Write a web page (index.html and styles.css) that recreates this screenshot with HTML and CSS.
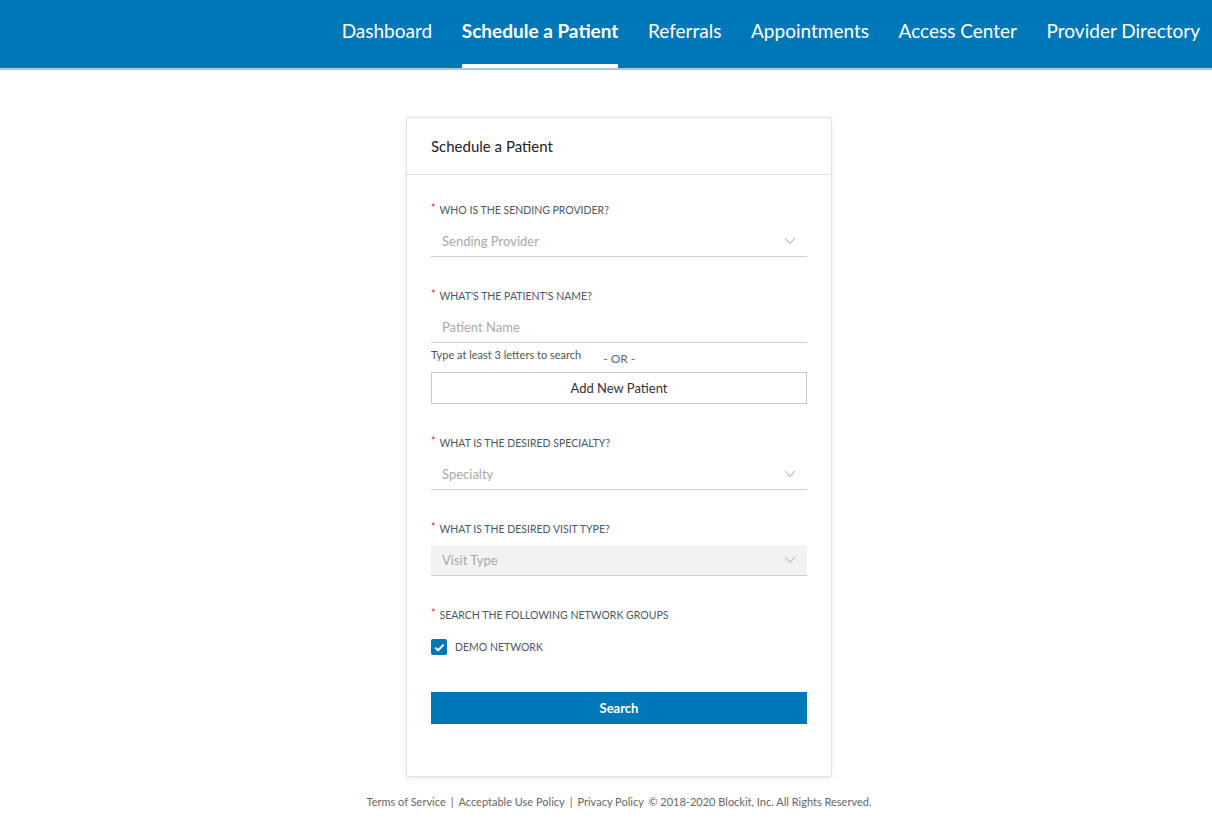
FILE: index.html
```html
<!DOCTYPE html>
<html lang="en">
<head>
    <meta charset="UTF-8">
    <title>Schedule a Patient</title>
    <link rel="stylesheet" href="styles.css">
</head>
<body>

    <header class="topbar">
        <nav class="nav">
            <a href="#" class="nav-item">Dashboard</a>
            <a href="#" class="nav-item active">Schedule a Patient</a>
            <a href="#" class="nav-item">Referrals</a>
            <a href="#" class="nav-item">Appointments</a>
            <a href="#" class="nav-item">Access Center</a>
            <a href="#" class="nav-item">Provider Directory</a>
        </nav>
    </header>

    <main class="page">
        <div class="card">
            <div class="card-header">Schedule a Patient</div>
            <div class="card-body">

                <div class="field">
                    <label class="field-label"><span class="req">*</span>Who is the sending provider?</label>
                    <div class="select">
                        <span class="placeholder">Sending Provider</span>
                        <svg class="chevron" width="12" height="8" viewBox="0 0 12 8"><path d="M1 1l5 5.5L11 1" fill="none" stroke="#b5b5b5" stroke-width="1.1"/></svg>
                    </div>
                </div>

                <div class="field">
                    <label class="field-label"><span class="req">*</span>What's the patient's name?</label>
                    <div class="select">
                        <span class="placeholder">Patient Name</span>
                    </div>
                    <div class="hint-row">
                        <span class="hint">Type at least 3 letters to search</span>
                        <span class="or">- OR -</span>
                    </div>
                    <button class="btn-outline">Add New Patient</button>
                </div>

                <div class="field">
                    <label class="field-label"><span class="req">*</span>What is the desired specialty?</label>
                    <div class="select">
                        <span class="placeholder">Specialty</span>
                        <svg class="chevron" width="12" height="8" viewBox="0 0 12 8"><path d="M1 1l5 5.5L11 1" fill="none" stroke="#b5b5b5" stroke-width="1.1"/></svg>
                    </div>
                </div>

                <div class="field">
                    <label class="field-label"><span class="req">*</span>What is the desired visit type?</label>
                    <div class="select disabled">
                        <span class="placeholder">Visit Type</span>
                        <svg class="chevron" width="12" height="8" viewBox="0 0 12 8"><path d="M1 1l5 5.5L11 1" fill="none" stroke="#b5b5b5" stroke-width="1.1"/></svg>
                    </div>
                </div>

                <div class="field">
                    <label class="field-label"><span class="req">*</span>Search the following network groups</label>
                    <div class="check-row">
                        <span class="checkbox">
                            <svg width="11" height="9" viewBox="0 0 11 9"><path d="M1.3 4.6l2.8 2.7L9.7 1.6" fill="none" stroke="#fff" stroke-width="2"/></svg>
                        </span>
                        <span class="check-label">Demo Network</span>
                    </div>
                </div>

                <button class="btn-primary">Search</button>
            </div>
        </div>

        <footer class="footer">
            <a href="#">Terms of Service</a><span class="sep">|</span><a href="#">Acceptable Use Policy</a><span class="sep">|</span><a href="#">Privacy Policy</a>
            <span class="copy">© 2018-2020 Blockit, Inc. All Rights Reserved.</span>
        </footer>
    </main>

</body>
</html>
```

FILE: styles.css
```css
body {
    margin: 0;
    font-family: "Lato", "Noto Sans", sans-serif;
    background: #fff;
    color: #333;
}
.topbar {
    height: 68px;
    background-color: #0077b6;
    border-bottom: 2px solid #a9c8e4;
    display: flex;
    justify-content: flex-end;
}
.nav {
    display: flex;
    height: 100%;
}
.nav-item {
    color: #fff;
    text-decoration: none;
    font-size: 19px;
    margin: 0 12px 0 17.6px;
    display: flex;
    align-items: center;
    box-sizing: border-box;
    height: 100%;
    padding-bottom: 4px;
    border-bottom: 4px solid transparent;
}
.nav-item:last-child {
    margin-right: 12px;
}
.nav-item.active {
    font-weight: bold;
    border-bottom-color: #fff;
}
.page {
    display: flex;
    flex-direction: column;
    align-items: center;
    padding-top: 47px;
}
.card {
    width: 424px;
    border: 1px solid #e2e2e2;
    border-radius: 2px;
    box-shadow: 0 2px 6px rgba(0, 0, 0, 0.08);
    margin-left: 26px;
}
.card-header {
    height: 57px;
    box-sizing: border-box;
    padding: 19px 24px 0;
    font-size: 15px;
    color: #222;
    border-bottom: 1px solid #e2e2e2;
}
.card-body {
    padding: 29px 24px 52px;
}
.field {
    margin-bottom: 33px;
}
.field-label {
    display: block;
    font-size: 10.5px;
    text-transform: uppercase;
    color: #4b5866;
    height: 16px;
}
.req {
    color: #e02020;
    margin-right: 4px;
    position: relative;
    top: -2px;
}
.select {
    height: 31px;
    margin-top: 6px;
    border-bottom: 1px solid #cfcfcf;
    display: flex;
    align-items: center;
    justify-content: space-between;
    padding: 0 11px;
    box-sizing: border-box;
}
.select.disabled {
    background: #f2f2f2;
}
.placeholder {
    font-size: 13px;
    color: #a8a8a8;
}
.hint-row {
    display: flex;
    align-items: flex-start;
    margin-top: 5px;
    height: 24px;
}
.hint {
    font-size: 11px;
    color: #555;
}
.or {
    font-size: 12px;
    color: #5b6c80;
    margin-left: 22px;
    margin-top: 3px;
}
.btn-outline {
    display: block;
    width: 100%;
    height: 32px;
    background: #fff;
    border: 1px solid #c9c9c9;
    font-family: inherit;
    font-size: 13px;
    color: #333;
}
.check-row {
    display: flex;
    align-items: center;
    margin-top: 14px;
}
.checkbox {
    width: 16px;
    height: 16px;
    background: #0077b6;
    border-radius: 2px;
    display: flex;
    align-items: center;
    justify-content: center;
    margin-right: 8px;
}
.check-label {
    font-size: 10.5px;
    color: #4b5866;
    text-transform: uppercase;
}
.btn-primary {
    display: block;
    width: 100%;
    height: 32px;
    margin-top: 37px;
    background: #0077b6;
    border: none;
    color: #fff;
    font-family: inherit;
    font-size: 13px;
    font-weight: bold;
}
.footer {
    margin-top: 18px;
    font-size: 11px;
    color: #666;
    margin-left: 26px;
}
.footer a {
    color: #666;
    text-decoration: none;
}
.sep {
    margin: 0 5px;
}
.copy {
    margin-left: 2px;
}
```
